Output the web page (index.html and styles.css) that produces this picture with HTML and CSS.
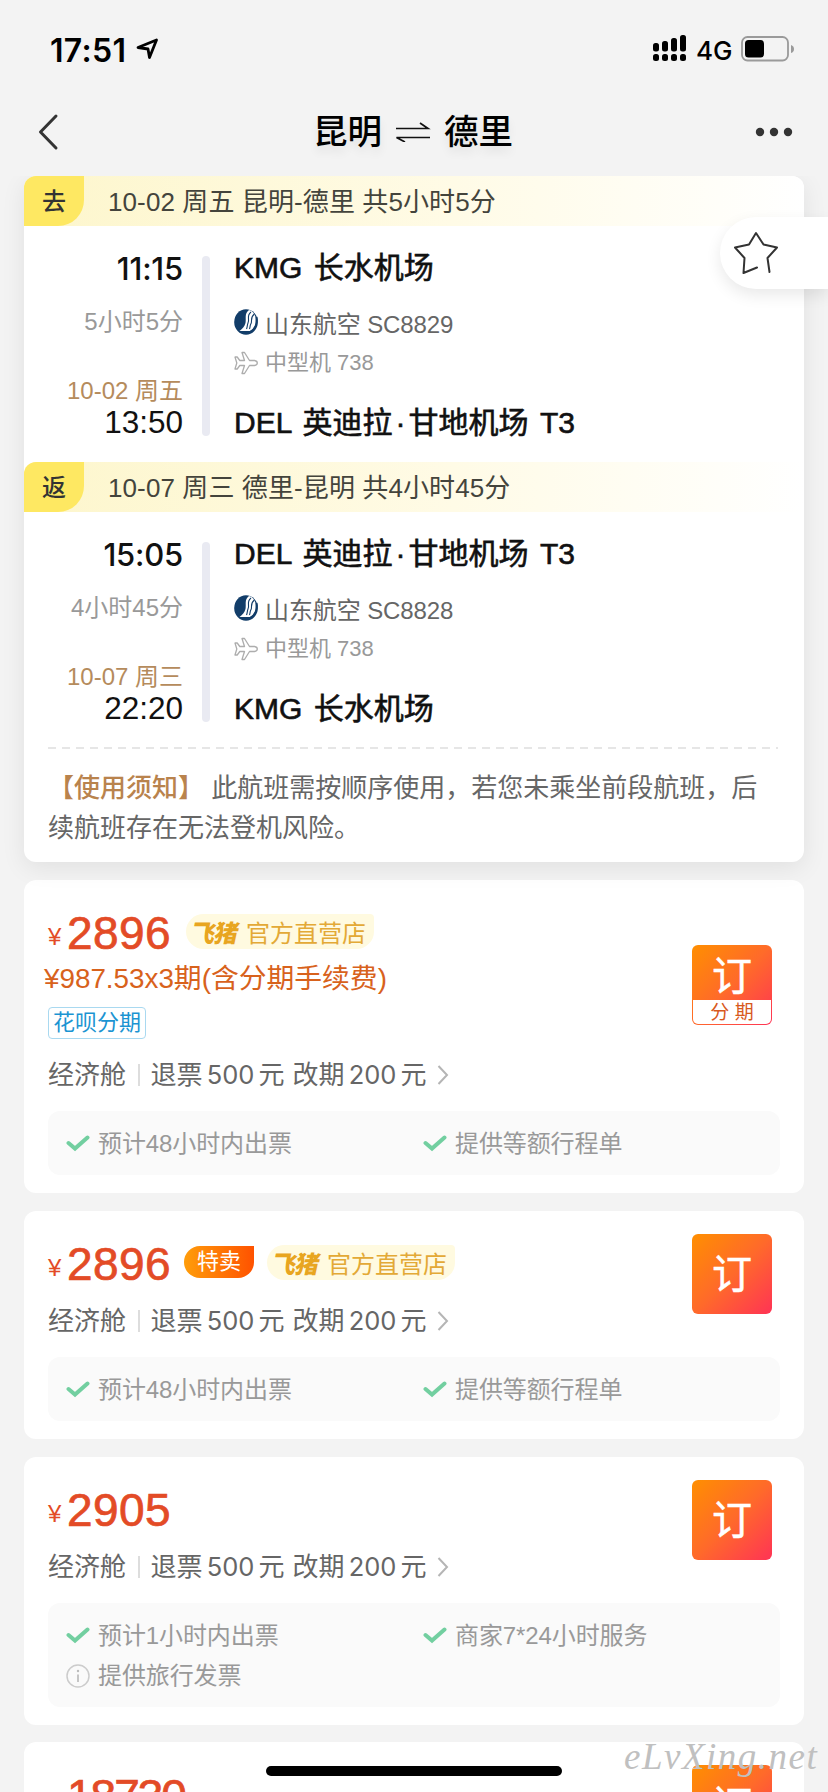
FILE: index.html
```html
<!DOCTYPE html>
<html lang="zh-CN">
<head>
<meta charset="utf-8">
<title>昆明 ⇌ 德里</title>
<link rel="stylesheet" href="styles.css">
</head>
<body>
<svg width="0" height="0" class="defs">
  <symbol id="check" viewBox="0 0 24 18"><path d="M2.500 8 L9 13.500 L21.500 2.500" fill="none" stroke="#72cfa0" stroke-width="4" stroke-linecap="round" stroke-linejoin="miter"/></symbol>
  <symbol id="info" viewBox="0 0 24 24"><circle cx="12" cy="12" r="11" fill="none" stroke="#ccc" stroke-width="1.5"/><circle cx="12" cy="7" r="1.2" fill="#bbb"/><path d="M12 10.5V18" stroke="#bbb" stroke-width="1.7"/></symbol>
  <symbol id="more" viewBox="0 0 12 20"><path d="M1.5 1 L10 10 L1.5 19" fill="none" stroke="#b5b5b5" stroke-width="2"/></symbol>
  <symbol id="plane" viewBox="0 0 24 24"><path d="M1 6 H3.200 L5.800 9.500 H10.500 L8 1.500 H10.500 L15.500 9.500 H20.500 Q23.300 10 23.300 12 Q23.300 14 20.500 14.500 H15.500 L10.500 22.500 H8 L10.500 14.500 H5.800 L3.200 18 H1 L2.800 12 Z" fill="none" stroke="#adadad" stroke-width="1.300" stroke-linejoin="round"/></symbol>
  <symbol id="airline" viewBox="0 0 24 26"><ellipse cx="12" cy="13" rx="11.800" ry="12.800" fill="#123d69"/><path d="M15 1 C10 5 12.500 9 11.500 14 C10.500 18 8.500 19.500 5.500 22 H16 C20 20 22 16 21.500 11 C22 6 19 2 15 1Z" fill="#fff"/><path d="M17 3 C12 7 16 10 14 14 C13 16.500 13.500 18 12.500 20 M20.300 5 C15.500 9 18.800 12 16.800 15 C15.800 17 16.300 18 15.500 20" fill="none" stroke="#123d69" stroke-width="1.100"/><path d="M22.600 8 C24 14 21 20.500 16 23" fill="none" stroke="#123d69" stroke-width="1.800"/></symbol>
</svg>
<div class="screen">
  <header class="status">
    <span class="clock">17:51</span>
    <svg class="locate" width="23" height="22" viewBox="0 0 23 22"><path d="M2 9.500 L20.500 2 L13.500 19.500 L12 11 Z" fill="none" stroke="#000" stroke-width="2.800" stroke-linejoin="round"/></svg>
    <svg class="signal" width="34" height="28" viewBox="0 0 34 28"><g fill="#000"><rect x="0" y="8" width="6" height="8.500" rx="2.500"/><rect x="9" y="6" width="6" height="10.500" rx="2.500"/><rect x="18" y="3" width="6" height="13.500" rx="2.500"/><rect x="27" y="0" width="6" height="16.500" rx="2.500"/><rect x="0" y="19" width="6" height="7" rx="2.500"/><rect x="9" y="19" width="6" height="7" rx="2.500"/><rect x="18" y="19" width="6" height="7" rx="2.500"/><rect x="27" y="19" width="6" height="7" rx="2.500"/></g></svg>
    <span class="net">4G</span>
    <svg class="battery" width="54" height="26" viewBox="0 0 54 26"><rect x="1" y="1" width="46" height="23.500" rx="5.500" fill="none" stroke="#9a9a9a" stroke-width="1.800"/><rect x="4" y="4" width="19" height="17.500" rx="3.500"/><path d="M50 9 Q53 10 53 13 Q53 16 50 17Z" fill="#9a9a9a"/></svg>
  </header>
  <nav class="nav">
    <svg width="22" height="38" viewBox="0 0 22 38"><path d="M19 3 L3.500 19 L19 35" fill="none" stroke="#333" stroke-width="3" stroke-linecap="round" stroke-linejoin="round"/></svg>
    <h1 class="title"><span>昆明</span><svg width="36" height="20" viewBox="0 0 36 20"><path d="M1 6.500 H33 L25 1 M35 15.500 H1.500 L10 20" fill="none" stroke="#111" stroke-width="1.700"/></svg><span>德里</span></h1>
    <svg width="38" height="10" viewBox="0 0 38 10"><g fill="#333"><circle cx="5" cy="5" r="4.200"/><circle cx="19" cy="5" r="4.200"/><circle cx="33" cy="5" r="4.200"/></g></svg>
  </nav>
  <main class="list">
    <section class="trip">
      <div class="bar"><span class="tag">去</span><span class="sum">10-02 周五 昆明-德里 共5小时5分</span></div>
      <div class="leg">
        <div class="times"><b class="t1">11:15</b><span class="dur">5小时5分</span><span class="date">10-02 周五</span><span class="t2">13:50</span></div>
        <i class="line"></i>
        <div class="places"><b class="place">KMG 长水机场</b><span class="air"><svg width="24" height="26"><use href="#airline"/></svg>山东航空 SC8829</span><span class="craft"><svg width="24" height="24"><use href="#plane"/></svg>中型机 738</span><b class="place end">DEL 英迪拉<i class="dot">·</i>甘地机场 T3</b></div>
      </div>
      <div class="bar"><span class="tag">返</span><span class="sum">10-07 周三 德里-昆明 共4小时45分</span></div>
      <div class="leg">
        <div class="times"><b class="t1">15:05</b><span class="dur">4小时45分</span><span class="date">10-07 周三</span><span class="t2">22:20</span></div>
        <i class="line"></i>
        <div class="places"><b class="place">DEL 英迪拉<i class="dot">·</i>甘地机场 T3</b><span class="air"><svg width="24" height="26"><use href="#airline"/></svg>山东航空 SC8828</span><span class="craft"><svg width="24" height="24"><use href="#plane"/></svg>中型机 738</span><b class="place end">KMG 长水机场</b></div>
      </div>
      <svg class="dash" width="732" height="2"><path d="M0 1H730" stroke="#dedede" stroke-width="1.500" stroke-dasharray="8 6"/></svg>
      <p class="notice"><b>【使用须知】</b> 此航班需按顺序使用，若您未乘坐前段航班，后续航班存在无法登机风险。</p>
    </section>

    <section class="offer">
      <div class="top">
        <div class="info">
          <div class="price"><span class="yen">¥</span><span class="num">2896</span><span class="shop"><b>飞猪</b>官方直营店</span></div>
          <div class="stage">¥987.53x3期(含分期手续费)</div>
          <span class="huabei">花呗分期</span>
          <div class="rule"><span>经济舱</span><i></i><span>退票</span><em>500</em><span>元</span><span class="chg">改期</span><em>200</em><span>元</span><svg width="12" height="20"><use href="#more"/></svg></div>
        </div>
        <div class="book split"><span>订</span><small>分 期</small></div>
      </div>
      <div class="perks"><span><svg width="24" height="18"><use href="#check"/></svg>预计48小时内出票</span><span><svg width="24" height="18"><use href="#check"/></svg>提供等额行程单</span></div>
    </section>

    <section class="offer">
      <div class="top">
        <div class="info">
          <div class="price"><span class="yen">¥</span><span class="num">2896</span><span class="sale">特卖</span><span class="shop"><b>飞猪</b>官方直营店</span></div>
          <div class="rule"><span>经济舱</span><i></i><span>退票</span><em>500</em><span>元</span><span class="chg">改期</span><em>200</em><span>元</span><svg width="12" height="20"><use href="#more"/></svg></div>
        </div>
        <div class="book"><span>订</span></div>
      </div>
      <div class="perks"><span><svg width="24" height="18"><use href="#check"/></svg>预计48小时内出票</span><span><svg width="24" height="18"><use href="#check"/></svg>提供等额行程单</span></div>
    </section>

    <section class="offer">
      <div class="top">
        <div class="info">
          <div class="price"><span class="yen">¥</span><span class="num">2905</span></div>
          <div class="rule"><span>经济舱</span><i></i><span>退票</span><em>500</em><span>元</span><span class="chg">改期</span><em>200</em><span>元</span><svg width="12" height="20"><use href="#more"/></svg></div>
        </div>
        <div class="book"><span>订</span></div>
      </div>
      <div class="perks"><span><svg width="24" height="18"><use href="#check"/></svg>预计1小时内出票</span><span><svg width="24" height="18"><use href="#check"/></svg>商家7*24小时服务</span><span><svg width="24" height="24"><use href="#info"/></svg>提供旅行发票</span></div>
    </section>

    <section class="offer">
      <div class="top">
        <div class="info"><div class="price low"><span class="yen">¥</span><span class="num wide">18730</span></div></div>
        <div class="book"><span>订</span></div>
      </div>
    </section>
  </main>
  <div class="fav"><svg width="46" height="44" viewBox="0 0 46 44"><path d="M24 36.500 L10.500 42 L11.500 27 L2 16.500 L16 13.500 L23 2 L30.500 13.500 L44 16.500 L34.500 27 L36.500 41" fill="none" stroke="#333" stroke-width="2" stroke-linecap="round" stroke-linejoin="round"/></svg></div>
  <div class="home"></div>
  <div class="mark">eLvXing.net</div>
</div>
</body>
</html>
```

FILE: styles.css
```css
* { box-sizing: border-box; }
body { margin: 0; font-family: "Liberation Sans", "Noto Sans CJK SC", sans-serif; background: #f3f3f3; }
i, em { font-style: normal; }
svg { flex: none; display: block; }
.defs { position: absolute; }
.screen { position: relative; width: 828px; height: 1792px; overflow: hidden; background: #f3f3f3; }

.status { display: flex; align-items: center; height: 98px; padding: 0 33px 0 50px; font-family: Inter, sans-serif; }
.clock { font-size: 32px; font-weight: 600; letter-spacing: .3px; width: 86px; margin-top: 2px; }
.signal { margin-left: auto; }
.net { font-size: 26px; font-weight: 500; margin: 2px 0 0 9px; width: 45px; }

.nav { display: flex; align-items: center; justify-content: space-between; height: 78px; padding: 0 35px 10px 37px; }
.title { display: flex; align-items: center; gap: 13px; margin: 0; font-size: 34.500px; font-weight: 500; line-height: 50px; text-shadow: 0 6px 10px rgba(0,0,0,.08); transform: translateX(6px); }

.list { display: flex; flex-direction: column; gap: 17.600px; padding: 0 24px; }
.trip { height: 686px; border-radius: 12px; background: #fff; box-shadow: 0 6px 24px rgba(0,0,0,.08); clip-path: inset(0 -24px -40px -24px); }
.bar { display: flex; height: 50px; border-top-left-radius: 12px; background: linear-gradient(90deg, #fdf6cc, #fffbe6 55%, #fff); }
.bar:first-child { border-top-right-radius: 12px; }
.tag { width: 60px; line-height: 52px; text-align: center; font-size: 24px; font-weight: 500; color: #333; background: #fee862; border-radius: 12px 0 26px 0; }
.sum { margin-left: 24px; font-size: 26px; line-height: 53px; color: #44443c; letter-spacing: .1px; }
.leg { display: flex; height: 236px; padding-top: 30px; }
.times { width: 159px; display: flex; flex-direction: column; align-items: flex-end; }
.t1 { font-family: Inter, sans-serif; font-size: 31px; font-weight: 500; line-height: 30px; letter-spacing: -.2px; color: #111; margin-top: -2px; }
.t2 { font-size: 31.500px; line-height: 33px; color: #111; height: 32px; }
.dur { font-size: 24px; line-height: 30px; margin-top: 23px; color: #999; }
.date { font-size: 24px; line-height: 30px; margin-top: 39px; color: #b58b5c; }
.line { width: 8px; height: 180px; border-radius: 4px; background: #e9eaf2; margin: 0 24px 0 19px; }
.places { display: flex; flex-direction: column; }
.place { font-size: 30px; font-weight: 400; -webkit-text-stroke: .6px #111; line-height: 36px; margin-top: -6px; color: #111; word-spacing: 3px; white-space: nowrap; }
.place.end { margin-top: 24px; }
.dot { display: inline-block; width: 16px; text-align: center; }
.air, .craft { display: flex; align-items: center; gap: 7px; line-height: 36px; }
.air { font-size: 24px; margin-top: 21px; color: #666; letter-spacing: -.1px; }
.air svg { margin-top: -6px; }
.craft { font-size: 22px; margin-top: 2px; color: #999; }
.dash { margin: -1px 24px 0; }
.notice { margin: 19px 24px 0; font-size: 26px; line-height: 40px; color: #666; }
.notice b { font-weight: 500; color: #b9834d; }

.offer { padding: 23px 24px 18px; border-radius: 12px; background: #fff; }
.top { display: flex; justify-content: space-between; align-items: flex-start; padding-right: 8px; }
.price { display: flex; align-items: center; height: 60px; color: #e34b26; }
.price.low { padding-top: 2px; }
.yen { font-size: 24px; width: 19px; margin-top: 9px; }
.num { font-size: 46px; width: 104px; letter-spacing: .4px; -webkit-text-stroke: .7px #e34b26; }
.num.wide { letter-spacing: -2px; }
.shop { display: flex; align-items: center; height: 35px; margin: -3px 0 0 15px; padding: 0 8px 0 6px; border-radius: 18px 4px 18px 18px; background: #fffae0; color: #e3a936; font-size: 24px; white-space: nowrap; }
.shop b { font-weight: 900; letter-spacing: -1px; margin-right: 6px; transform: skewX(-12deg); color: #e8a520; width: 48px; }
.sale { width: 70px; height: 32px; margin: -3px 0 0 13px; border-radius: 16px 0 16px 16px; background: linear-gradient(90deg, #ff9d0a, #ff5200); color: #fff; font-size: 22px; line-height: 32px; text-align: center; }
.sale + .shop { margin-left: 13px; }
.stage { margin-left: -4px; font-size: 27.800px; line-height: 36px; margin-top: -2px; color: #d8621c; }
.huabei { display: block; width: 98px; height: 32px; margin: 10px 0 12px; border: 1.500px solid #a9d9f0; border-radius: 4px; font-size: 22px; line-height: 29px; text-align: center; color: #1b94d2; }
.rule { display: flex; align-items: center; height: 48px; font-size: 26px; line-height: 48px; color: #666; margin-top: 3px; }
.rule i { width: 1.500px; height: 22px; background: #ddd; margin: 0 11px 0 12px; }
.rule em { font-family: Inter, sans-serif; font-size: 25.500px; width: 56px; text-align: center; }
.rule .chg { margin-left: 8px; }
.rule svg { margin-left: 10px; }
.book { width: 80px; height: 80px; border-radius: 6px; background: linear-gradient(135deg, #ff8f00, #ff6a2a 50%, #ff3355); color: #fff; font-size: 40px; font-weight: 400; -webkit-text-stroke: .5px #fff; line-height: 80px; text-align: center; }
.split { margin-top: 42px; display: flex; flex-direction: column; padding: 0 1px 1px; }
.split span { height: 55px; line-height: 62px; }
.split small { height: 24px; background: #fff; border-radius: 0 0 5px 5px; color: #d8591c; font-size: 19px; -webkit-text-stroke: 0; line-height: 25px; }
.perks { display: grid; grid-template-columns: 357px 1fr; margin-top: 12px; padding: 13.500px 18px 11.500px; border-radius: 12px; background: #fafafa; font-size: 24px; line-height: 39.500px; color: #999; letter-spacing: -.1px; }
.perks span { display: flex; align-items: center; gap: 8px; }

.fav { position: absolute; left: 720px; top: 217px; width: 108px; height: 72px; padding: 14px 0 0 13px; border-radius: 36px 0 0 36px; background: #fff; box-shadow: 0 6px 16px rgba(0,0,0,.09); }
.home { position: absolute; left: 266px; top: 1766px; width: 296px; height: 10px; border-radius: 5px; background: #000; }
.mark { position: absolute; left: 624px; top: 1735px; font: italic 37px/44px "Liberation Serif", serif; letter-spacing: 1.500px; color: #c0c0c0; }
```
